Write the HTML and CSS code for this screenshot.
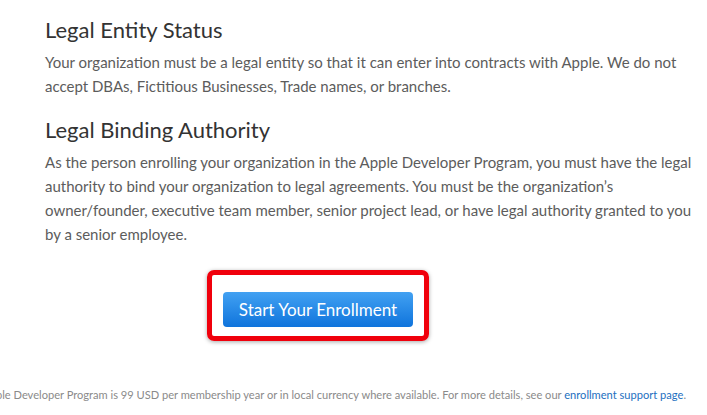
FILE: index.html
```html
<!DOCTYPE html>
<html lang="en">
<head>
  <meta charset="UTF-8" />
  <title>Apple Developer Program Enrollment</title>
  <link rel="stylesheet" href="styles.css">
</head>
<body>
  <div id="page">
    <div class="section">
      <h2>Legal Entity Status</h2>
      <p>Your organization must be a legal entity so that it can enter into contracts with Apple. We do not<br>
      accept DBAs, Fictitious Businesses, Trade names, or branches.</p>
    </div>
    <div class="section">
      <h2>Legal Binding Authority</h2>
      <p>As the person enrolling your organization in the Apple Developer Program, you must have the legal<br>
      authority to bind your organization to legal agreements. You must be the organization&rsquo;s<br>
      owner/founder, executive team member, senior project lead, or have legal authority granted to you<br>
      by a senior employee.</p>
    </div>
    <div class="cta">
      <div class="highlight">
        <a href="#" class="btn">Start Your Enrollment</a>
      </div>
    </div>
    <div class="footnote">
      <span>The cost of the Apple Developer Program is 99 USD per membership year or in local currency where available. For more details, see our <a href="#">enrollment support page</a>.</span>
    </div>
  </div>
</body>
</html>
```

FILE: styles.css
```css
* {
  box-sizing: border-box;
  margin: 0;
  padding: 0;
}
html, body {
  background: #fff;
  overflow: hidden;
}
body {
  font-family: 'Lato', 'Open Sans', sans-serif;
  width: 707px;
  height: 415px;
}
#page {
  display: flex;
  flex-direction: column;
}
.section {
  padding-left: 45px;
}
.section:first-child {
  padding-top: 16px;
}
.section + .section {
  margin-top: 18px;
}
.section h2 {
  font-size: 22px;
  font-weight: 400;
  color: #333;
  line-height: 28px;
  margin-bottom: 6px;
}
.section p {
  font-size: 15px;
  line-height: 24px;
  color: #5c5c5c;
  white-space: nowrap;
}
.cta {
  padding-left: 207px;
  margin-top: 24px;
}
.highlight {
  display: inline-block;
  border: 5px solid #f0000c;
  border-radius: 7px;
  padding: 17px 11px 9px;
  box-shadow: 0 1px 4px rgba(0, 0, 0, 0.35);
}
.btn {
  display: block;
  width: 190px;
  height: 35px;
  line-height: 35px;
  text-align: center;
  border-radius: 4px;
  background: linear-gradient(180deg, #42a1f2 0%, #0f74dc 100%);
  color: #fff;
  font-size: 17px;
  text-decoration: none;
}
.footnote {
  margin-top: 47px;
  display: flex;
  justify-content: flex-end;
  padding-right: 21px;
  font-size: 11.1px;
  color: #8a8a8a;
  white-space: nowrap;
}
.footnote a {
  color: #1d6fc0;
  text-decoration: none;
}
```
